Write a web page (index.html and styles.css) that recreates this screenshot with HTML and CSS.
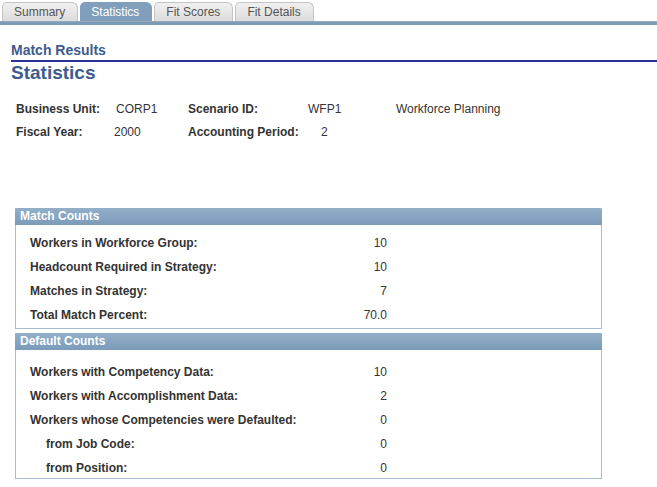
FILE: index.html
```html
<!DOCTYPE html>
<html>
<head>
<meta charset="utf-8">
<link rel="stylesheet" href="styles.css">
</head>
<body>
<div class="tabs">
  <div class="tab">Summary</div>
  <div class="tab active">Statistics</div>
  <div class="tab">Fit Scores</div>
  <div class="tab">Fit Details</div>
</div>
<div class="tabbar"></div>
<div class="page">
  <div class="crumb">Match Results</div>
  <h1 class="title">Statistics</h1>
  <div class="fields">
    <span class="lbl">Business Unit:</span><span class="val v1">CORP1</span>
    <span class="lbl">Scenario ID:</span><span class="val v2">WFP1</span><span class="val">Workforce Planning</span>
    <span class="lbl">Fiscal Year:</span><span class="val v1b">2000</span>
    <span class="lbl">Accounting Period:</span><span class="val v2b">2</span><span></span>
  </div>
  <div class="box box1">
    <div class="box-head">Match Counts</div>
    <div class="rows">
      <span class="rl">Workers in Workforce Group:</span><span class="rv">10</span>
      <span class="rl">Headcount Required in Strategy:</span><span class="rv">10</span>
      <span class="rl">Matches in Strategy:</span><span class="rv">7</span>
      <span class="rl">Total Match Percent:</span><span class="rv">70.0</span>
    </div>
  </div>
  <div class="box box2">
    <div class="box-head">Default Counts</div>
    <div class="rows">
      <span class="rl">Workers with Competency Data:</span><span class="rv">10</span>
      <span class="rl">Workers with Accomplishment Data:</span><span class="rv">2</span>
      <span class="rl">Workers whose Competencies were Defaulted:</span><span class="rv">0</span>
      <span class="rl sub">from Job Code:</span><span class="rv">0</span>
      <span class="rl sub">from Position:</span><span class="rv">0</span>
    </div>
  </div>
</div>
</body>
</html>
```
FILE: styles.css
```css
html, body {
  margin: 0;
  padding: 0;
  background: #ffffff;
  font-family: "Liberation Sans", Arial, sans-serif;
  font-size: 12px;
  color: #333333;
}
.tabs {
  display: flex;
  gap: 2px;
  padding: 2px 0 0 2px;
  height: 19px;
  box-sizing: content-box;
}
.tab {
  height: 19px;
  box-sizing: border-box;
  padding: 2px 12px 0 11px;
  border: 1px solid #c4c4c4;
  border-bottom: none;
  border-radius: 5px 6px 0 0;
  background: linear-gradient(#f0f0f0, #dcdcdc);
  color: #555555;
  font-size: 12px;
  line-height: 15px;
}
.tab.active {
  background: #7f9fbd;
  border-color: #7f9fbd;
  color: #ffffff;
  padding: 2px 12px 0 10px;
}
.tabbar {
  height: 3px;
  border-top: 1px solid #9aa8b6;
  background: #7a9cbb;
}
.page {
  padding: 0 0 0 11px;
}
.crumb {
  margin-top: 17px;
  font-size: 14px;
  font-weight: bold;
  color: #3d5b8c;
  line-height: 16px;
  padding-bottom: 2px;
  border-bottom: 2px solid #2e3192;
}
.title {
  margin: 0;
  font-size: 19px;
  font-weight: bold;
  color: #3d5b8c;
  line-height: 22px;
}
.fields {
  margin: 18px 0 0 5px;
  display: grid;
  grid-template-columns: 100px 72px 120px 88px auto;
  row-gap: 8px;
  line-height: 15px;
}
.lbl {
  font-weight: bold;
  color: #333333;
}
.val {
  color: #333333;
}
.v1b { margin-left: -2px; }
.v2b { margin-left: 13px; }
.box {
  width: 587px;
  box-sizing: border-box;
  border: 1px solid #a6bcd4;
  border-top: none;
  margin-left: 4px;
}
.box1 { margin-top: 68px; }
.box2 { margin-top: 4px; }
.box-head {
  height: 17px;
  margin: 0 -1px;
  padding-left: 5px;
  background: linear-gradient(#93afc8, #7b9bba);
  border-radius: 2px 2px 0 0;
  color: #ffffff;
  font-weight: bold;
  font-size: 12px;
  line-height: 17px;
}
.rows {
  display: grid;
  grid-template-columns: 328px 29px;
  row-gap: 9px;
  padding: 11px 0 5px 14px;
  line-height: 15px;
}
.box2 .rows {
  padding-top: 15px;
  padding-bottom: 2px;
}
.rl {
  font-weight: bold;
  color: #333333;
}
.rl.sub { padding-left: 16px; }
.rv {
  text-align: right;
  color: #333333;
}
```
